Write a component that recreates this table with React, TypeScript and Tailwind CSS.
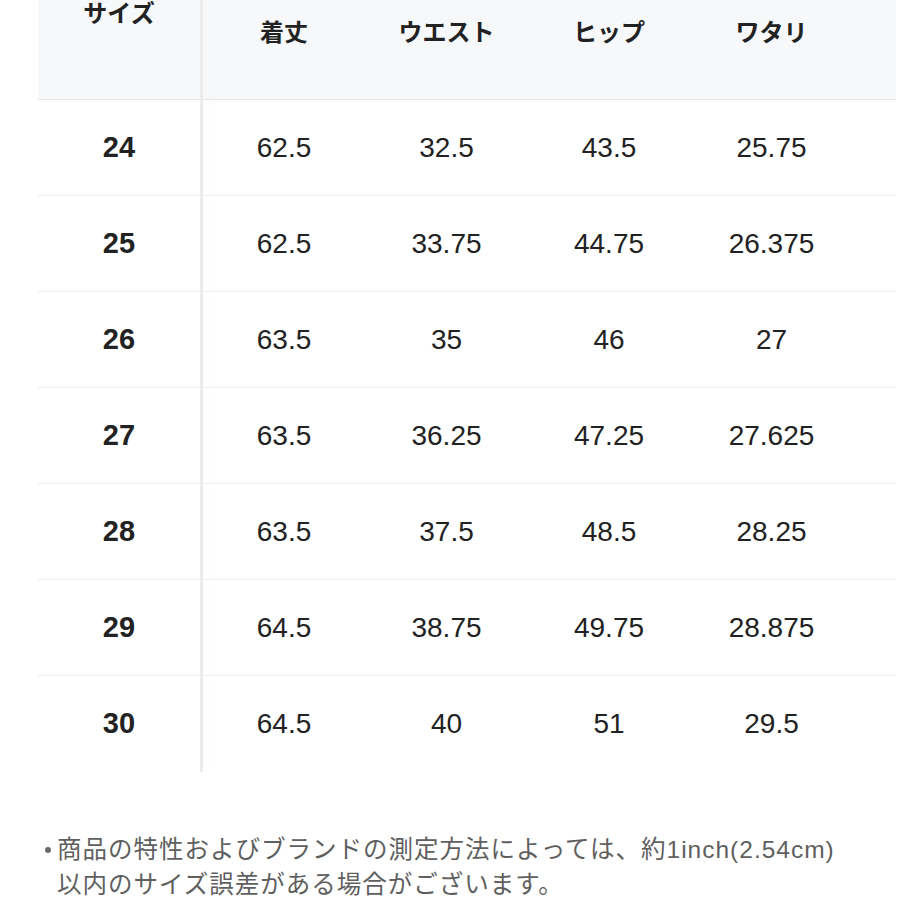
const headers = ["着丈", "ウエスト", "ヒップ", "ワタリ"]

const rows: [string, string, string, string, string][] = [
  ["24", "62.5", "32.5", "43.5", "25.75"],
  ["25", "62.5", "33.75", "44.75", "26.375"],
  ["26", "63.5", "35", "46", "27"],
  ["27", "63.5", "36.25", "47.25", "27.625"],
  ["28", "63.5", "37.5", "48.5", "28.25"],
  ["29", "64.5", "38.75", "49.75", "28.875"],
  ["30", "64.5", "40", "51", "29.5"],
]

const font = { fontFamily: '"Liberation Sans", "Noto Sans CJK JP", sans-serif' }

export default function App() {
  return (
    <div className="w-[900px] h-[900px] bg-white overflow-hidden text-[#222]" style={font}>
      {/* Table */}
      <div className="ml-[38px] w-[858px] flex">
        {/* Sticky size column */}
        <div className="w-[162px] shrink-0 flex flex-col">
          <div className="h-[100px] bg-[#f6f8fa] border-b border-[#e4e6e9] flex justify-center">
            <span className="text-[24px] font-bold leading-none mt-[2px]">サイズ</span>
          </div>
          {rows.map((r, i) => (
            <div
              key={r[0]}
              className={`h-[96px] flex items-center justify-center ${i < rows.length - 1 ? "border-b border-[#eeeeee]" : ""}`}
            >
              <span className="text-[29px] font-bold">{r[0]}</span>
            </div>
          ))}
        </div>

        {/* Divider */}
        <div className="w-[3px] shrink-0 bg-[#ececec] h-[772px] shadow-[6px_0_14px_rgba(0,0,0,0.04)]" />

        {/* Scrollable columns */}
        <div className="flex-1 flex flex-col">
          <div className="h-[100px] bg-[#f6f8fa] border-b border-[#e4e6e9] grid grid-cols-[162px_163px_162px_163px_1fr]">
            {headers.map((h) => (
              <div key={h} className="flex justify-center pt-[21px]">
                <span className="text-[24px] font-bold leading-none">{h}</span>
              </div>
            ))}
            <div />
          </div>
          {rows.map((r, i) => (
            <div
              key={r[0]}
              className={`h-[96px] grid grid-cols-[162px_163px_162px_163px_1fr] items-center ${i < rows.length - 1 ? "border-b border-[#eeeeee]" : ""}`}
            >
              {r.slice(1).map((v, j) => (
                <div key={j} className="text-center text-[28px]">
                  {v}
                </div>
              ))}
              <div />
            </div>
          ))}
        </div>
      </div>

      {/* Note */}
      <div className="mt-[60px] ml-[38px] flex text-[24.5px] leading-[35px] tracking-[1px] text-[#5f5f5f]">
        <span className="w-[19px] shrink-0 flex justify-center pt-[15px]">
          <span className="w-[6px] h-[6px] rounded-full bg-[#6a6a6a]" />
        </span>
        <p className="w-[840px] whitespace-nowrap">
          商品の特性およびブランドの測定方法によっては、約1inch(2.54cm)
          <br />
          以内のサイズ誤差がある場合がございます。
        </p>
      </div>
    </div>
  )
}
